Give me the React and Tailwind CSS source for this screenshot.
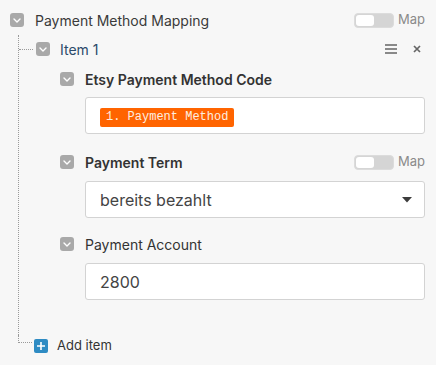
import React from 'react';

const font = { fontFamily: 'Inter, "Noto Sans", sans-serif' };

function Check() {
  return (
    <span className="w-[14px] h-[14px] shrink-0 rounded-[3px] bg-[#a9a9a9] flex items-center justify-center">
      <svg width="8" height="5" viewBox="0 0 8 5" fill="none">
        <path d="M1 1l3 3 3-3" stroke="#fff" strokeWidth="1.4" strokeLinecap="round" strokeLinejoin="round" />
      </svg>
    </span>
  );
}

function Toggle() {
  return (
    <div className="ml-auto flex items-center">
      <div className="w-[40px] h-[15px] rounded-[4px] bg-[#d5d5d5] border border-[#dcdcdc] flex items-center pl-[1px]">
        <div className="w-[18px] h-[11px] bg-white rounded-[3px]" />
      </div>
      <span className="ml-[4px] text-[13px] text-[#8a8a8a]">Map</span>
    </div>
  );
}

function Label({ children, bold, toggle }) {
  return (
    <div className="flex items-center h-[14px]">
      <Check />
      <span className={`ml-[11px] text-[14px] text-[#333] ${bold ? 'font-semibold' : ''}`}>{children}</span>
      {toggle && <Toggle />}
    </div>
  );
}

export default function App() {
  return (
    <div className="w-[436px] h-[365px] bg-[#f7f7f7] pl-[10px] pr-[11px] pt-[13px] overflow-hidden" style={font}>
      {/* top level field */}
      <div className="flex items-center h-[14px]">
        <Check />
        <span className="ml-[11px] text-[14px] text-[#3a3a3a]">Payment Method Mapping</span>
        <Toggle />
      </div>

      <div className="ml-[8px] mt-[8px]">
        <div className="border-l border-dotted border-[#9a9a9a] pt-[7px]">
          {/* item row */}
          <div className="flex items-center h-[14px]">
            <div className="w-[14px] border-t border-dotted border-[#9a9a9a]" />
            <span className="ml-[3px]"><Check /></span>
            <span className="ml-[10px] text-[14px] text-[#2b4a6a]">Item 1</span>
            <div className="ml-auto flex items-center gap-[16px] pr-[4px]">
              <svg width="12" height="10" viewBox="0 0 12 10">
                <path d="M0 1h12M0 5h12M0 9h12" stroke="#666" strokeWidth="1.5" />
              </svg>
              <svg width="8" height="8" viewBox="0 0 8 8">
                <path d="M1 1l6 6M7 1l-6 6" stroke="#666" strokeWidth="1.7" />
              </svg>
            </div>
          </div>

          {/* fields */}
          <div className="pl-[41px] mt-[16px]">
            <Label bold>Etsy Payment Method Code</Label>
            <div className="ml-[25px] mt-[11px] h-[37px] bg-white border border-[#d3d3d3] rounded-[3px] flex items-center pl-[14px] pt-[3px]">
              <span className="h-[19px] px-[6px] rounded-[2px] bg-[#ff6400] text-[#fdeee0] text-[12px] leading-[19px]" style={{ fontFamily: '"Liberation Mono", monospace' }}>
                1. Payment Method
              </span>
            </div>

            <div className="mt-[21px]">
              <Label bold toggle>Payment Term</Label>
            </div>
            <div className="ml-[25px] mt-[12px] h-[37px] bg-white border border-[#d3d3d3] rounded-[3px] flex items-center pl-[14px] pr-[12px]">
              <span className="text-[16px] text-[#444]">bereits bezahlt</span>
              <svg className="ml-auto" width="10" height="6" viewBox="0 0 10 6">
                <path d="M0 0h10L5 5.5z" fill="#3c3c3c" />
              </svg>
            </div>

            <div className="mt-[19px]">
              <Label>Payment Account</Label>
            </div>
            <div className="ml-[25px] mt-[12px] h-[37px] bg-white border border-[#d3d3d3] rounded-[3px] flex items-center pl-[14px]">
              <span className="text-[16px] text-[#444]">2800</span>
            </div>
          </div>
          <div className="h-[35px]" />
        </div>

        {/* add item */}
        <div className="flex items-start">
          <div className="w-[14px] h-[8px] border-l border-b border-dotted border-[#9a9a9a]" />
          <div className="ml-[2px] mt-[1px] flex items-center">
            <span className="w-[14px] h-[14px] rounded-[2px] bg-[#2e8bc3] flex items-center justify-center">
              <svg width="8" height="8" viewBox="0 0 8 8">
                <path d="M4 0v8M0 4h8" stroke="#fff" strokeWidth="1.6" />
              </svg>
            </span>
            <span className="ml-[9px] text-[13px] text-[#333]">Add item</span>
          </div>
        </div>
      </div>
    </div>
  );
}
